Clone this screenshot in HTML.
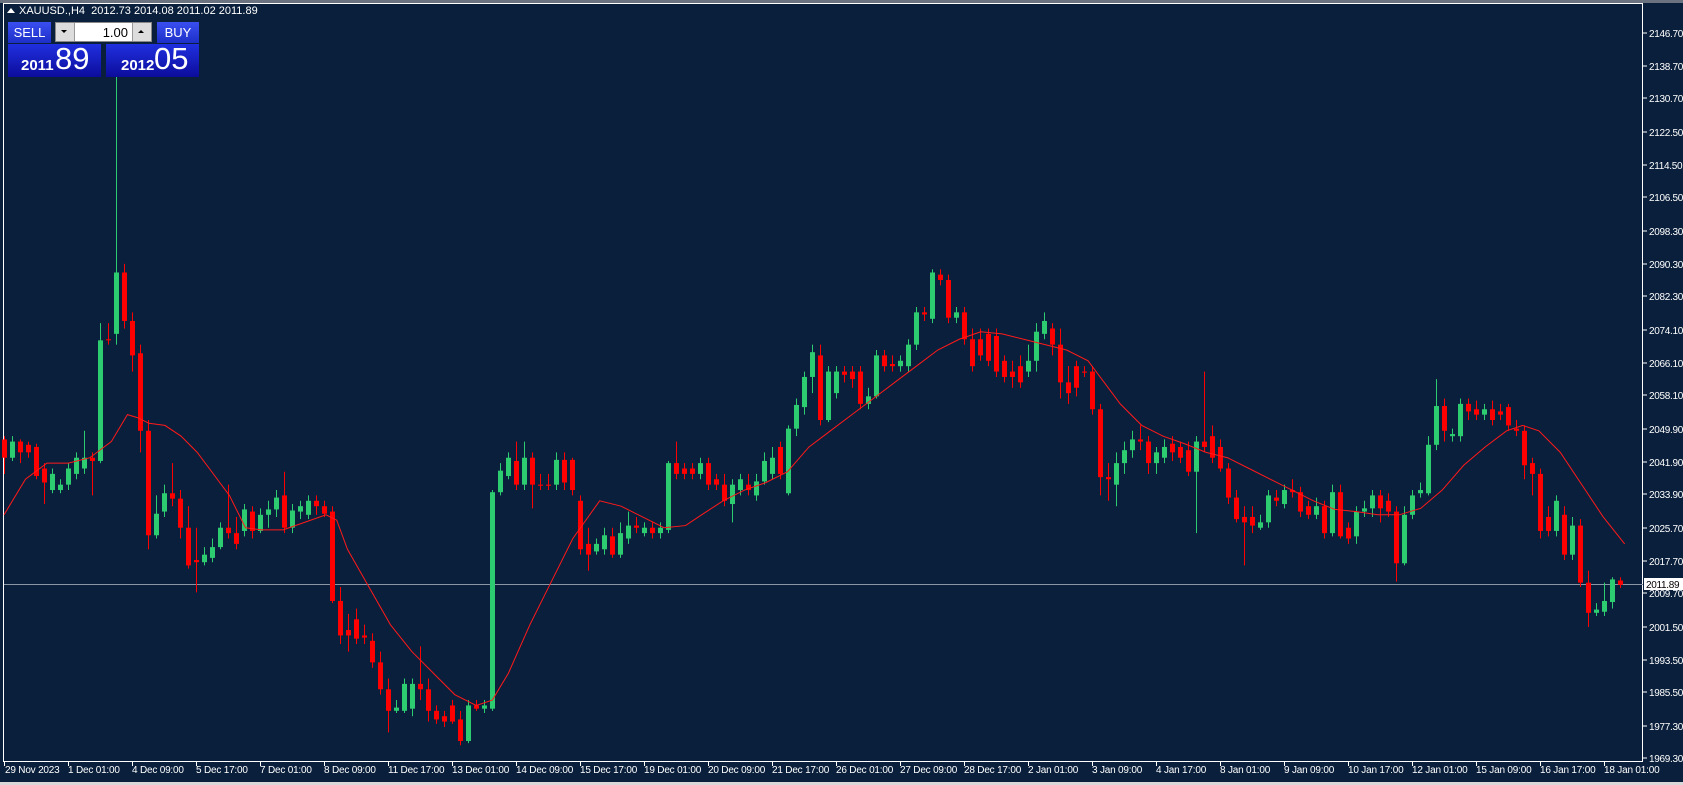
<!DOCTYPE html>
<html><head><meta charset="utf-8"><style>
html,body{margin:0;padding:0;width:1683px;height:785px;overflow:hidden;background:#0a1f3b;font-family:"Liberation Sans",sans-serif}
#top{position:absolute;left:0;top:0;width:1683px;height:3px;background:#6b7380}
#bot{position:absolute;left:0;top:782px;width:1683px;height:3px;background:#d8d8d8}
svg{position:absolute;left:0;top:0}
.hdr{position:absolute;left:19px;top:5px;color:#fff;font-size:11px;white-space:nowrap}
.tri{position:absolute;left:7px;top:8px;width:0;height:0;border-left:4px solid transparent;border-right:4px solid transparent;border-bottom:5px solid #fff}
.btn{position:absolute;top:22px;height:21px;background:linear-gradient(#3a4ff0,#1e2fc8);color:#fff;font-size:13px;text-align:center;line-height:21px}
.spin{position:absolute;left:55px;top:22px;width:97px;height:20px;background:#fff;border:1px solid #888;box-sizing:border-box}
.big{position:absolute;top:44px;height:33px;background:linear-gradient(#2030e0,#0c0c9a);color:#fff;white-space:nowrap}
.big b{position:absolute;font-size:15px;bottom:3px}
.big span{position:absolute;font-size:31px;bottom:0px}
.dates span{position:absolute}
</style></head><body>
<div id="top"></div>
<svg id="ch" width="1683" height="785"></svg>
<div class="tri"></div>
<div class="hdr">XAUUSD.,H4&nbsp; 2012.73 2014.08 2011.02 2011.89</div>
<div class="btn" style="left:8px;width:43px">SELL</div>
<div class="spin"><div style="position:absolute;left:0;top:0;width:18px;height:18px;background:#ddd;border-right:1px solid #999"><div style="position:absolute;left:5px;top:7px;border-left:3px solid transparent;border-right:3px solid transparent;border-top:3px solid #000"></div></div><div style="position:absolute;right:23px;top:2px;font-size:13px;color:#000">1.00</div><div style="position:absolute;right:0;top:0;width:18px;height:18px;background:#ddd;border-left:1px solid #999"><div style="position:absolute;left:5px;top:7px;border-left:3px solid transparent;border-right:3px solid transparent;border-bottom:3px solid #000"></div></div></div>
<div class="btn" style="left:157px;width:42px">BUY</div>
<div class="big" style="left:8px;width:93px"><b style="left:13px">2011</b><span style="left:47px">89</span></div>
<div class="big" style="left:106px;width:93px"><b style="left:15px">2012</b><span style="left:48px">05</span></div>
<div id="bot"></div>
<script>
var D=[[408,425,405,440],[425,410,405,428],[410,420,408,430],[413,420,410,425],[415,442,412,445],[435,448,430,468],[455,440,435,458],[455,450,445,458],[450,435,430,455],[440,425,420,445],[435,425,400,440],[425,428,420,460],[428,316,300,430],[315,316,300,320],[310,253,70,320],[253,298,245,305],[298,330,290,345],[328,400,320,420],[400,497,390,510],[497,477,460,500],[475,458,450,480],[458,463,430,470],[463,490,455,500],[490,525,470,528],[520,522,490,550],[522,515,508,525],[518,508,500,522],[508,490,485,510],[490,495,450,500],[495,505,480,510],[493,473,468,498],[475,493,470,500],[493,478,472,495],[478,473,465,490],[473,462,455,480],[460,490,438,495],[490,474,468,495],[475,470,465,482],[478,465,460,482],[465,470,460,478],[470,477,465,480],[475,558,470,560],[558,590,545,598],[585,590,570,605],[575,593,565,598],[590,592,580,598],[595,615,588,620],[615,640,605,645],[640,660,630,680],[660,657,650,662],[660,635,630,662],[658,635,630,665],[635,640,600,650],[640,660,630,670],[660,668,655,672],[665,670,660,675],[655,670,650,672],[668,688,660,692],[688,655,650,690],[655,658,650,660],[658,655,650,662],[658,457,455,660],[457,437,430,460],[442,425,420,445],[428,450,410,455],[450,425,410,455],[425,450,420,472],[450,451,440,455],[450,451,440,455],[450,427,420,455],[427,448,420,455],[427,455,425,460],[465,510,460,515],[505,515,490,530],[512,505,500,515],[510,497,490,515],[498,515,490,518],[515,495,485,518],[500,488,475,505],[488,490,480,495],[495,490,485,498],[490,495,485,500],[495,490,485,500],[492,430,428,495],[430,440,410,445],[435,440,430,445],[435,440,430,445],[440,430,425,445],[430,450,425,455],[445,450,440,455],[450,465,440,470],[468,450,445,485],[455,445,440,460],[450,455,440,460],[460,447,440,465],[447,428,420,450],[440,425,415,445],[415,440,410,445],[458,398,395,460],[398,376,370,405],[378,350,345,385],[350,327,320,365],[330,390,320,395],[390,345,340,392],[365,345,340,370],[345,348,340,355],[345,352,340,360],[345,375,340,380],[375,368,360,380],[368,330,325,370],[330,340,325,345],[338,340,330,345],[340,335,330,345],[340,320,315,345],[320,290,285,325],[290,292,285,298],[296,253,250,300],[255,260,250,265],[260,295,255,300],[295,290,285,300],[290,315,285,320],[315,340,305,345],[315,330,305,335],[310,335,305,340],[312,345,305,350],[335,350,330,355],[345,350,335,360],[340,355,330,360],[345,335,320,350],[335,308,300,345],[310,298,290,315],[305,320,300,330],[320,355,305,370],[355,365,340,375],[340,360,335,368],[345,346,340,350],[345,380,340,385],[380,443,375,460],[443,445,430,465],[450,430,420,470],[430,418,410,440],[418,408,400,425],[408,410,395,418],[410,430,405,440],[430,420,415,440],[425,415,408,430],[412,420,405,428],[415,425,410,430],[418,438,410,442],[438,410,405,495],[410,415,345,420],[405,425,395,430],[415,435,408,438],[435,462,430,468],[462,482,455,485],[480,485,470,525],[480,488,470,495],[490,485,478,492],[485,460,455,490],[462,465,455,470],[468,455,450,472],[455,457,445,462],[457,475,452,480],[470,478,465,482],[478,470,462,482],[470,495,465,500],[495,457,450,498],[457,498,450,500],[490,500,485,505],[498,475,470,505],[475,472,465,480],[472,460,455,480],[460,472,455,485],[465,475,458,480],[475,523,470,540],[523,478,470,525],[478,460,455,482],[458,455,448,462],[458,413,405,460],[413,377,352,418],[377,400,370,410],[405,403,398,410],[405,375,370,410],[375,382,370,390],[380,385,372,390],[385,380,375,390],[380,390,372,395],[382,385,375,390],[378,395,375,400],[398,400,390,405],[400,432,395,445],[430,440,425,460],[440,493,435,500],[480,493,470,498],[493,465,460,498],[478,515,470,520],[515,488,480,520],[488,541,482,545],[541,569,530,582],[569,566,560,572],[568,558,541,572],[559,538,536,565],[539,543,536,546]];
var MA=[[0,478],[20,445],[40,430],[60,430],[80,425],[100,410],[115,385],[125,388],[135,393],[150,395],[165,405],[180,420],[195,440],[210,460],[225,490],[240,492],[260,492],[280,485],[300,478],[310,483],[320,510],[340,545],[360,580],[380,605],[400,625],[420,645],[440,655],[455,650],[470,625],[490,580],[510,540],[530,500],[555,465],[575,470],[595,480],[615,490],[635,488],[650,478],[670,465],[690,455],[710,448],[730,438],[750,415],[770,400],[790,385],[810,370],[830,355],[850,340],[870,325],[890,315],[910,308],[930,310],[950,315],[970,320],[990,325],[1010,335],[1025,355],[1040,375],[1060,395],[1080,405],[1100,412],[1120,420],[1140,425],[1160,435],[1180,445],[1200,455],[1220,465],[1240,473],[1260,475],[1280,478],[1300,478],[1320,472],[1340,455],[1360,432],[1380,415],[1400,400],[1415,395],[1430,400],[1450,420],[1470,450],[1490,480],[1510,505]];
var k=1.077,s='';
s+='<rect x="3.5" y="3.5" width="1639" height="758" fill="none" stroke="#fff"/>';
s+='<line x1="4" y1="584.5" x2="1643" y2="584.5" stroke="#8a96a6"/>';
for(var i=0;i<D.length;i++){var d=D[i],x=4+8*i,o=d[0]*k,c=d[1]*k,h=d[2]*k,l=d[3]*k,g=c<o,col=g?'#2ecc71':'#ff0000';
var t=Math.min(o,c),b=Math.max(o,c);if(b-t<1)b=t+1;
s+='<line x1="'+(x+.5)+'" y1="'+h+'" x2="'+(x+.5)+'" y2="'+l+'" stroke="'+col+'"/>';
s+='<rect x="'+(x-2)+'" y="'+t+'" width="5" height="'+(b-t)+'" fill="'+col+'"/>';}
var p='';for(var j=0;j<MA.length;j++)p+=(j?'L':'M')+(MA[j][0]*1.0733+4)+' '+(MA[j][1]*k)+' ';
s+='<path d="'+p+'" fill="none" stroke="#ff1a1a" stroke-width="1"/>';
document.getElementById('ch').insertAdjacentHTML('beforeend',s);
</script>
<svg width="1683" height="785" style="pointer-events:none">
<g font-family="Liberation Sans,sans-serif" font-size="10" letter-spacing="-0.3" fill="#fff">
<g stroke="#fff">
<line x1="1643" y1="33" x2="1647" y2="33"/><line x1="1643" y1="66" x2="1647" y2="66"/><line x1="1643" y1="98" x2="1647" y2="98"/><line x1="1643" y1="132" x2="1647" y2="132"/><line x1="1643" y1="165" x2="1647" y2="165"/><line x1="1643" y1="197" x2="1647" y2="197"/><line x1="1643" y1="231" x2="1647" y2="231"/><line x1="1643" y1="264" x2="1647" y2="264"/><line x1="1643" y1="296" x2="1647" y2="296"/><line x1="1643" y1="330" x2="1647" y2="330"/><line x1="1643" y1="363" x2="1647" y2="363"/><line x1="1643" y1="395" x2="1647" y2="395"/><line x1="1643" y1="429" x2="1647" y2="429"/><line x1="1643" y1="462" x2="1647" y2="462"/><line x1="1643" y1="494" x2="1647" y2="494"/><line x1="1643" y1="528" x2="1647" y2="528"/><line x1="1643" y1="561" x2="1647" y2="561"/><line x1="1643" y1="593" x2="1647" y2="593"/><line x1="1643" y1="627" x2="1647" y2="627"/><line x1="1643" y1="660" x2="1647" y2="660"/><line x1="1643" y1="692" x2="1647" y2="692"/><line x1="1643" y1="726" x2="1647" y2="726"/><line x1="1643" y1="758" x2="1647" y2="758"/>
</g>
<text x="1649" y="37">2146.70</text><text x="1649" y="70">2138.70</text><text x="1649" y="102">2130.70</text><text x="1649" y="136">2122.50</text><text x="1649" y="169">2114.50</text><text x="1649" y="201">2106.50</text><text x="1649" y="235">2098.30</text><text x="1649" y="268">2090.30</text><text x="1649" y="300">2082.30</text><text x="1649" y="334">2074.10</text><text x="1649" y="367">2066.10</text><text x="1649" y="399">2058.10</text><text x="1649" y="433">2049.90</text><text x="1649" y="466">2041.90</text><text x="1649" y="498">2033.90</text><text x="1649" y="532">2025.70</text><text x="1649" y="565">2017.70</text><text x="1649" y="597">2009.70</text><text x="1649" y="631">2001.50</text><text x="1649" y="664">1993.50</text><text x="1649" y="696">1985.50</text><text x="1649" y="730">1977.30</text><text x="1649" y="762">1969.30</text>
<rect x="1644" y="578" width="39" height="12" fill="#fff"/><text x="1646" y="588" fill="#000">2011.89</text>
<g id="dt"></g>
</g></svg>
<div class="dates" style="position:absolute;left:0;top:765px;width:1683px;height:16px;font-size:10px;letter-spacing:-0.2px;color:#fff;white-space:nowrap">
<span style="left:5px">29 Nov 2023</span><span style="left:68px">1 Dec 01:00</span><span style="left:132px">4 Dec 09:00</span><span style="left:196px">5 Dec 17:00</span><span style="left:260px">7 Dec 01:00</span><span style="left:324px">8 Dec 09:00</span><span style="left:388px">11 Dec 17:00</span><span style="left:452px">13 Dec 01:00</span><span style="left:516px">14 Dec 09:00</span><span style="left:580px">15 Dec 17:00</span><span style="left:644px">19 Dec 01:00</span><span style="left:708px">20 Dec 09:00</span><span style="left:772px">21 Dec 17:00</span><span style="left:836px">26 Dec 01:00</span><span style="left:900px">27 Dec 09:00</span><span style="left:964px">28 Dec 17:00</span><span style="left:1028px">2 Jan 01:00</span><span style="left:1092px">3 Jan 09:00</span><span style="left:1156px">4 Jan 17:00</span><span style="left:1220px">8 Jan 01:00</span><span style="left:1284px">9 Jan 09:00</span><span style="left:1348px">10 Jan 17:00</span><span style="left:1412px">12 Jan 01:00</span><span style="left:1476px">15 Jan 09:00</span><span style="left:1540px">16 Jan 17:00</span><span style="left:1604px">18 Jan 01:00</span>
</div>
<script>
var g='';for(var i=0;i<26;i++){var x=4+64*i;g+='<line x1="'+(x+.5)+'" y1="761" x2="'+(x+.5)+'" y2="766" stroke="#fff"/>';}
document.getElementById('dt').insertAdjacentHTML('beforeend',g);
</script>
</body></html>
